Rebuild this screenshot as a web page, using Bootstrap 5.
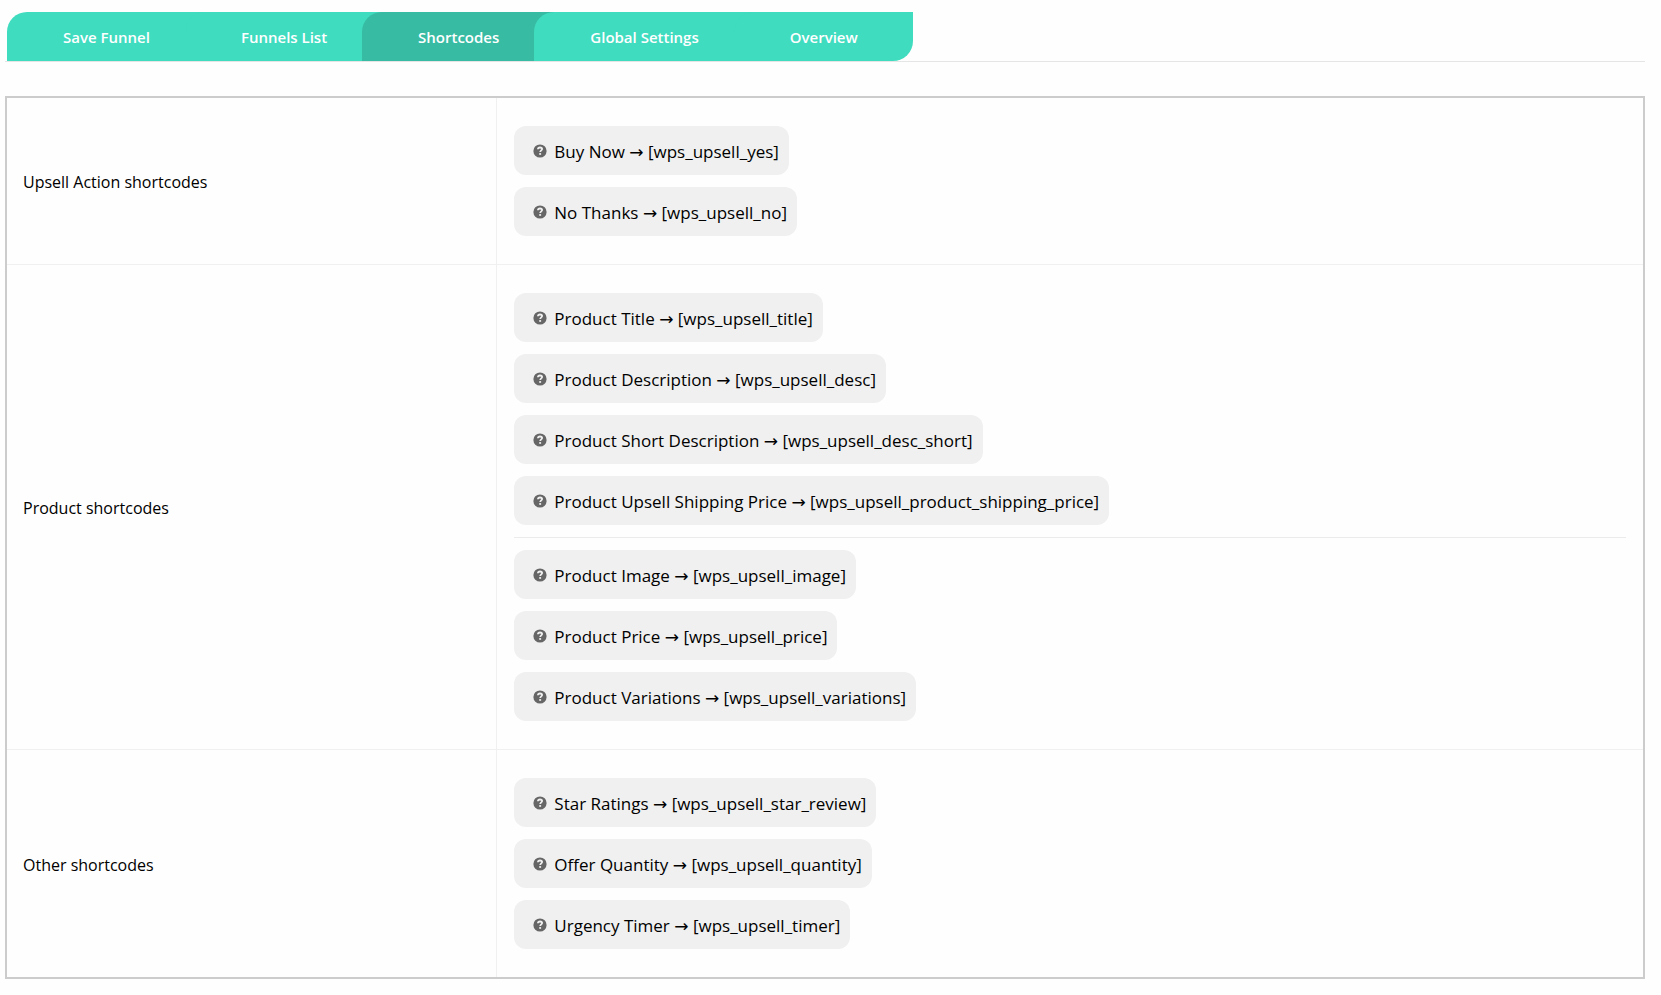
<!DOCTYPE html>
<html lang="en">
<head>
<meta charset="utf-8">
<meta name="viewport" content="width=device-width, initial-scale=1">
<title>Shortcodes</title>
<link href="https://cdn.jsdelivr.net/npm/bootstrap@5.3.0/dist/css/bootstrap.min.css" rel="stylesheet">
<style>
  body { font-family: "Open Sans", "Noto Sans", sans-serif; color: #000; background: #fefefe; }
  .page { padding: 12px 16px 16px 5px; }
  .tabs { border-bottom: 1px solid #e5e5e5; padding-left: 2px; margin-bottom: 34px; }
  .tabs .nav-link {
    height: 49px; padding: 0 55px 0 56px; line-height: 51px; font-size: 15px; font-weight: 600;
    color: #fff; background: #3fdcbf; border-top-left-radius: 20px; white-space: nowrap;
  }
  .tabs .nav-item + .nav-item { margin-left: -20px; z-index: 1; }
  .tabs .nav-link.active { background: #38bba3; }
  .tabs .nav-item:last-child .nav-link { border-bottom-right-radius: 20px; }
  .codes { border: 2px solid #ccc; }
  .codes table { color: #000; table-layout: fixed; }
  .codes tr + tr > * { border-top: 1px solid #f0f0f0; }
  .codes th { width: 29.94%; padding: 2px 16px 0; font-size: 16px; font-weight: 400; border-right: 1px solid #f0f0f0; }
  .codes td { padding: 28px 17px; }
  .stack { gap: 12px; }
  .chip { height: 49px; padding: 0 10px 0 19px; gap: 7px; border-radius: 12px; background: #f0f0f0; font-size: 17px; line-height: 24px; }
  .chip > span { padding-top: 2px; }
  .arrow { font-family: "DejaVu Sans", sans-serif; line-height: 1; }
  .stack hr { height: 1px; border: 0; background: #ebebeb; opacity: 1; }
</style>
</head>
<body>
<svg class="d-none" aria-hidden="true">
  <symbol id="help" viewBox="0 0 14 14">
    <circle cx="7" cy="7" r="6.6" fill="#666"/>
    <path d="M4.900 5.300C5 4.100 5.800 3.500 7 3.500s2.100.6 2.100 1.600C9.100 6.400 7.200 6.400 7.200 8.100" fill="none" stroke="#f0f0f0" stroke-width="1.800"/>
    <rect x="6.200" y="9.100" width="1.900" height="1.700" fill="#f0f0f0"/>
  </symbol>
</svg>
<main class="page">
  <nav class="tabs" aria-label="Funnel sections">
    <ul class="nav flex-nowrap">
      <li class="nav-item position-relative"><a class="nav-link" href="#">Save Funnel</a></li>
      <li class="nav-item position-relative"><a class="nav-link" href="#">Funnels List</a></li>
      <li class="nav-item position-relative"><a class="nav-link active" aria-current="page" href="#">Shortcodes</a></li>
      <li class="nav-item position-relative"><a class="nav-link" href="#">Global Settings</a></li>
      <li class="nav-item position-relative"><a class="nav-link" href="#">Overview</a></li>
    </ul>
  </nav>
  <div class="codes">
    <table class="w-100">
      <tbody>
        <tr>
          <th scope="row">Upsell Action shortcodes</th>
          <td>
            <div class="stack d-flex flex-column align-items-start">
              <div class="chip d-flex align-items-center"><svg width="14" height="14" aria-hidden="true"><use href="#help"/></svg><span>Buy Now <span class="arrow">→</span> [wps_upsell_yes]</span></div>
              <div class="chip d-flex align-items-center"><svg width="14" height="14" aria-hidden="true"><use href="#help"/></svg><span>No Thanks <span class="arrow">→</span> [wps_upsell_no]</span></div>
            </div>
          </td>
        </tr>
        <tr>
          <th scope="row">Product shortcodes</th>
          <td>
            <div class="stack d-flex flex-column align-items-start">
              <div class="chip d-flex align-items-center"><svg width="14" height="14" aria-hidden="true"><use href="#help"/></svg><span>Product Title <span class="arrow">→</span> [wps_upsell_title]</span></div>
              <div class="chip d-flex align-items-center"><svg width="14" height="14" aria-hidden="true"><use href="#help"/></svg><span>Product Description <span class="arrow">→</span> [wps_upsell_desc]</span></div>
              <div class="chip d-flex align-items-center"><svg width="14" height="14" aria-hidden="true"><use href="#help"/></svg><span>Product Short Description <span class="arrow">→</span> [wps_upsell_desc_short]</span></div>
              <div class="chip d-flex align-items-center"><svg width="14" height="14" aria-hidden="true"><use href="#help"/></svg><span>Product Upsell Shipping Price <span class="arrow">→</span> [wps_upsell_product_shipping_price]</span></div>
              <hr class="w-100 m-0">
              <div class="chip d-flex align-items-center"><svg width="14" height="14" aria-hidden="true"><use href="#help"/></svg><span>Product Image <span class="arrow">→</span> [wps_upsell_image]</span></div>
              <div class="chip d-flex align-items-center"><svg width="14" height="14" aria-hidden="true"><use href="#help"/></svg><span>Product Price <span class="arrow">→</span> [wps_upsell_price]</span></div>
              <div class="chip d-flex align-items-center"><svg width="14" height="14" aria-hidden="true"><use href="#help"/></svg><span>Product Variations <span class="arrow">→</span> [wps_upsell_variations]</span></div>
            </div>
          </td>
        </tr>
        <tr>
          <th scope="row">Other shortcodes</th>
          <td>
            <div class="stack d-flex flex-column align-items-start">
              <div class="chip d-flex align-items-center"><svg width="14" height="14" aria-hidden="true"><use href="#help"/></svg><span>Star Ratings <span class="arrow">→</span> [wps_upsell_star_review]</span></div>
              <div class="chip d-flex align-items-center"><svg width="14" height="14" aria-hidden="true"><use href="#help"/></svg><span>Offer Quantity <span class="arrow">→</span> [wps_upsell_quantity]</span></div>
              <div class="chip d-flex align-items-center"><svg width="14" height="14" aria-hidden="true"><use href="#help"/></svg><span>Urgency Timer <span class="arrow">→</span> [wps_upsell_timer]</span></div>
            </div>
          </td>
        </tr>
      </tbody>
    </table>
  </div>
</main>
<script src="https://cdn.jsdelivr.net/npm/bootstrap@5.3.0/dist/js/bootstrap.bundle.min.js"></script>
</body>
</html>
